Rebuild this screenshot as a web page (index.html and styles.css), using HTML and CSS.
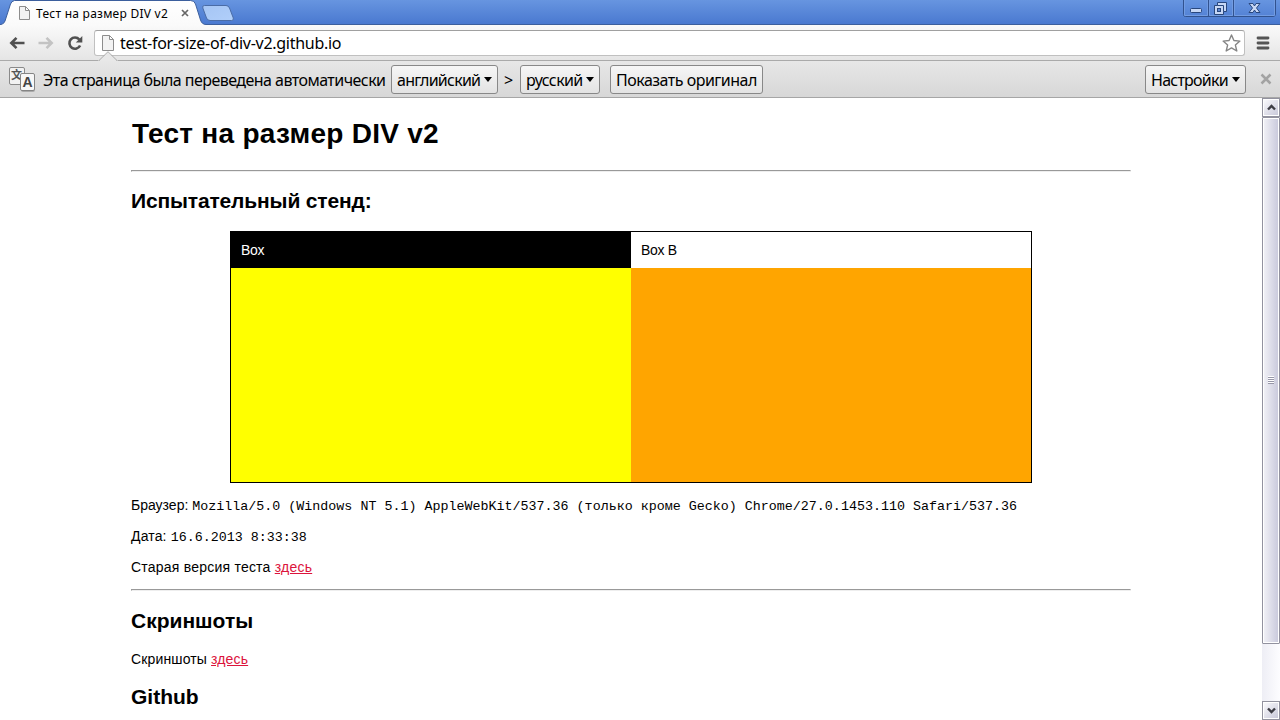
FILE: index.html
```html
<!DOCTYPE html>
<html lang="ru">
<head>
<meta charset="utf-8">
<title>Тест на размер DIV v2</title>
<link rel="stylesheet" href="styles.css">
</head>
<body>
<div class="browser">
  <header class="tabstrip">
    <svg class="tabshape" width="240" height="25" viewBox="0 0 240 25">
      <defs>
        <linearGradient id="tabfill" x1="0" y1="0" x2="0" y2="1"><stop offset="0" stop-color="#fff"/><stop offset="1" stop-color="#fafafa"/></linearGradient>
        <linearGradient id="newfill" x1="0" y1="0" x2="1" y2="1"><stop offset="0" stop-color="#a5c5f4"/><stop offset="1" stop-color="#b1cffa"/></linearGradient>
      </defs>
      <path d="M0 24.5H1Q4 24 5 21L10.500 4Q11.500 1 14.500 .5H190.500Q194.500 .5 195.500 4L200.500 20Q202 24.500 206 24.500V25H0Z" fill="url(#tabfill)"/>
      <path d="M0 24.500H1Q4 24 5 21L10.500 4Q11.500 1 14.500 .5H190.500Q194.500 .5 195.500 4L200.500 20Q202 24.500 206 24.500H240" fill="none" stroke="#3c5f9d"/>
      <path d="M204.500 5.500H226Q228.500 5.500 229.500 8L233.300 18Q234 20.500 231.500 20.500H210Q207.500 20.500 206.500 18L202.800 8Q202 5.500 204.500 5.500Z" fill="url(#newfill)" stroke="#4a6ca6"/>
    </svg>
    <div class="tab">
      <svg width="11" height="14" viewBox="0 0 11 14"><path d="M.5.5H6.500L10.500 4.500V13.500H.5ZM6.500.5V4.500H10.500" fill="#f3f3f3" stroke="#8d8d8d"/></svg>
      <span class="tabtitle">Тест на размер DIV v2</span>
      <svg class="tabclose" width="8" height="8" viewBox="0 0 8 8"><path d="M1 1L7 7M7 1L1 7" stroke="#666" stroke-width="1.700"/></svg>
    </div>
    <svg class="winbuttons" width="94" height="18" viewBox="0 0 94 18">
      <path d="M.5 0V14.500Q.5 16.500 2.500 16.500H90Q92.500 16.500 92.500 14V0M25.500 0V16M50.500 0V16" fill="none" stroke="#31528f"/>
      <path d="M1.500 0V15.500H24.500V0M26.500 0V15.500H49.500V0M51.500 0V15.500H91.500V0" fill="none" stroke="#729ce2"/>
      <rect x="7.500" y="8.500" width="11" height="4" rx="1" fill="#c7d7f5" stroke="#29477d"/>
      <path d="M34.500 2.500H43.500V11.500H40.500V14.500H31.500V5.500H34.500Z" fill="#c7d7f5" stroke="#29477d"/>
      <path d="M34.500 5.500H40.500V11.500" fill="none" stroke="#29477d"/><rect x="34.500" y="8.500" width="3" height="3" fill="#5f89d5" stroke="#29477d"/>
      <path d="M66 3.500H70L71.500 6L73 3.500H77L73.500 8L77 12.500H73L71.500 10L70 12.500H66L69.500 8Z" fill="#c7d7f5" stroke="#29477d"/>
    </svg>
  </header>

  <div class="toolbar">
    <div class="nav">
      <svg width="16" height="14" viewBox="0 0 16 14"><path d="M15.500 7H3M7.500 1.800L2.300 7L7.500 12.200" fill="none" stroke="#505050" stroke-width="2.600"/></svg>
      <svg width="16" height="14" viewBox="0 0 16 14"><path d="M.5 7H13M8.500 1.800L13.700 7L8.500 12.200" fill="none" stroke="#c3c3c3" stroke-width="2.600"/></svg>
      <svg width="16" height="16" viewBox="0 0 16 16"><path d="M12.300 4.500A5.600 5.600 0 1 0 13.100 10.500" fill="none" stroke="#505050" stroke-width="2.600"/><path d="M15.300 1V7.500H8.800Z" fill="#505050"/></svg>
    </div>
    <div class="omnibox">
      <svg width="12" height="16" viewBox="0 0 12 16"><path d="M.5.5H7.500L11.500 4.500V15.500H.5ZM7.500.5V4.500H11.500" fill="#f3f3f3" stroke="#8d8d8d"/></svg>
      <span class="url">test-for-size-of-div-v2.github.io</span>
      <svg class="star" width="19" height="18" viewBox="0 0 19 18"><path d="M9.500 1L11.900 6.500L17.900 7.100L13.400 11.100L14.800 17L9.500 13.900L4.200 17L5.600 11.100L1.100 7.100L7.100 6.500Z" fill="#fff" stroke="#858585" stroke-width="1.400" stroke-linejoin="round"/></svg>
    </div>
    <svg class="menu" width="14" height="14" viewBox="0 0 14 14"><path d="M2 2H12M2 7H12M2 12H12" stroke="#555" stroke-width="2.800" stroke-linecap="round"/></svg>
  </div>

  <div class="infobar">
    <svg class="notch" width="20" height="10" viewBox="0 0 20 10"><path d="M0 9.500H1.500L10 1L18.500 9.500H20V10H0Z" fill="#e8e8e8"/><path d="M1 9.500L10 .7L19 9.500" fill="none" stroke="#aaa"/></svg>
    <svg class="translate" width="28" height="27" viewBox="0 0 28 27">
      <rect x="1.500" y="1.500" width="15" height="17" rx="1.500" fill="#f2f2f2" stroke="#8a8a8a"/>
      <text x="3" y="13" class="glyph-cjk">文</text>
      <rect x="13" y="9" width="14" height="17" rx="2" fill="#aaa"/>
      <rect x="12.500" y="7.500" width="14" height="17" rx="1.500" fill="#f7f7f7" stroke="#858585"/>
      <text x="14.500" y="21" class="glyph-a">A</text>
    </svg>
    <span class="message">Эта страница была переведена автоматически</span>
    <button class="btn from"><span>английский</span><i class="caret"></i></button>
    <span class="gt">&gt;</span>
    <button class="btn to"><span>русский</span><i class="caret"></i></button>
    <button class="btn original"><span>Показать оригинал</span></button>
    <button class="btn settings"><span>Настройки</span><i class="caret"></i></button>
    <svg class="infoclose" width="12" height="12" viewBox="0 0 12 12"><path d="M1.500 1.500L10.500 10.500M10.500 1.500L1.500 10.500" stroke="#a3a3a3" stroke-width="2.500"/></svg>
  </div>

  <div class="viewport">
    <main class="page">
      <h1>Тест на размер DIV v2</h1>
      <hr>
      <h2 class="bench">Испытательный стенд:</h2>
      <div class="boxes">
        <section class="box box-a"><div class="boxhead">Box</div></section>
        <section class="box box-b"><div class="boxhead">Box B</div></section>
      </div>
      <p>Браузер: <code>Mozilla/5.0 (Windows NT 5.1) AppleWebKit/537.36 (только кроме Gecko) Chrome/27.0.1453.110 Safari/537.36</code></p>
      <p class="date">Дата: <code>16.6.2013 8:33:38</code></p>
      <p class="old">Старая версия теста <a href="#">здесь</a></p>
      <hr class="second">
      <h2>Скриншоты</h2>
      <p class="shots">Скриншоты <a href="#">здесь</a></p>
      <h2>Github</h2>
    </main>
    <aside class="scrollbar">
      <div class="arrow"><svg width="9" height="7" viewBox="0 0 9 7"><path d="M1 5.500L4.500 2L8 5.500" fill="none" stroke="#3c3c44" stroke-width="2.400"/></svg></div>
      <div class="thumb"><i class="grip"></i></div>
      <div class="arrow down"><svg width="9" height="7" viewBox="0 0 9 7"><path d="M1 1.500L4.500 5L8 1.500" fill="none" stroke="#3c3c44" stroke-width="2.400"/></svg></div>
    </aside>
  </div>
</div>
</body>
</html>
```

FILE: styles.css
```css
* { box-sizing: border-box; }
body { margin: 0; overflow: hidden; background: #fff; }
svg { display: block; flex: none; }
.browser { width: 1280px; height: 720px; display: flex; flex-direction: column; overflow: hidden; font-family: "Noto Sans", sans-serif; color: #000; }

.tabstrip { position: relative; height: 25px; flex: none; display: flex; justify-content: space-between; background: linear-gradient(#6795e0, #4a79d0); border-bottom: 1px solid #3c5f9d; }
.tabshape { position: absolute; left: 0; top: 0; }
.tab { position: relative; display: flex; align-items: center; height: 26px; padding-left: 19px; }
.tabtitle { margin-left: 6px; width: 132px; font-size: 12px; letter-spacing: 0.25px; white-space: nowrap; }
.tabclose { margin-left: 13px; }
.winbuttons { margin-right: 3px; }

.toolbar { height: 35px; flex: none; display: flex; align-items: center; background: linear-gradient(#fafafa, #e5e5e5); }
.nav { display: flex; align-items: center; gap: 13px; width: 94px; padding-left: 9px; }
.omnibox { width: 1151px; height: 26px; display: flex; align-items: center; padding: 0 3px 0 7px; background: #fff; border: 1px solid #c0c0c0; border-top-color: #a0a0a0; border-radius: 3px; }
.url { margin-left: 6px; font-size: 16px; letter-spacing: -0.28px; line-height: 22px; white-space: nowrap; }
.star { margin-left: auto; }
.menu { margin-left: 11px; }

.infobar { position: relative; height: 38px; flex: none; display: flex; align-items: center; padding-left: 8px; background: linear-gradient(#e7e7e7, #d7d7d7); border-top: 1px solid #aaa; border-bottom: 1px solid #a6a6a6; font-size: 16px; white-space: nowrap; }
.notch { position: absolute; left: 98px; top: -10px; }
.glyph-cjk { font: bold 11px "Noto Sans CJK SC", sans-serif; fill: #555; }
.glyph-a { font: bold 14px "Liberation Sans", sans-serif; fill: #444; }
.message { width: 349px; padding: 2px 0 0 7px; letter-spacing: -0.54px; }
.btn { height: 29px; flex: none; display: flex; align-items: center; justify-content: space-between; padding: 1px 5px 0; font: 16px/22px "Noto Sans", sans-serif; letter-spacing: -0.75px; color: #000; background: linear-gradient(#f6f6f6, #e3e3e3); border: 1px solid #888; border-radius: 3px; white-space: nowrap; }
.caret { flex: none; width: 8px; height: 5px; background: #000; clip-path: polygon(0 0, 100% 0, 50% 100%); }
.from { width: 107px; margin-left: 6px; }
.gt { width: 22px; padding: 2px 0 0 6px; }
.to { width: 80px; letter-spacing: -0.6px; }
.original { width: 153px; margin-left: 10px; letter-spacing: -0.5px; }
.settings { width: 101px; margin-left: auto; }
.infoclose { margin: 0 8px 0 14px; }

.viewport { flex: 1; min-height: 0; display: flex; background: #fff; }
.page { flex: 1; height: 622px; overflow: hidden; padding: 20px 131px 0; font: 14px/16px "Liberation Sans", Arial, sans-serif; }
.page h1 { margin: 0 0 20px; padding-left: 1px; font-size: 28px; line-height: 32px; letter-spacing: 0.27px; }
.page hr { margin: 0; height: 2px; border: 1px solid; border-color: #999 #eee #eee #999; }
.page h2 { margin: 18px 0; font-size: 21px; line-height: 24px; }
.page .bench { margin-top: 17px; letter-spacing: -0.15px; }
.boxes { display: flex; width: 802px; height: 252px; margin: 0 99px 14px; border: 1px solid #000; }
.box { width: 400px; }
.boxhead { height: 36px; padding: 10px; letter-spacing: -0.3px; }
.box-a { background: #ff0; }
.box-a .boxhead { background: #000; color: #fff; }
.box-b { background: #ffa500; }
.box-b .boxhead { background: #fff; }
.page p { margin: 0 0 15px; white-space: nowrap; height: 16px; }
.page code { font: 13.333px/15px "Liberation Mono", "Courier New", monospace; letter-spacing: 0.01px; }
.page .date { letter-spacing: 0.15px; }
.page .old { letter-spacing: 0.22px; }
.page a { color: #dc143c; }
.page .second { margin-top: -1px; }
.page .shots { margin: 0 0 18px; letter-spacing: 0.14px; }

.scrollbar { width: 18px; height: 622px; display: flex; flex-direction: column; background: linear-gradient(90deg, #eeeef5, #fdfdff); }
.arrow { height: 19px; flex: none; display: flex; align-items: center; justify-content: center; border: 1px solid #92929f; box-shadow: inset 0 0 0 1px #fff; background: linear-gradient(135deg, #fcfcfe, #c6c6d8); }
.down { margin-top: auto; }
.thumb { height: 527px; display: flex; align-items: center; justify-content: center; border: 1px solid #92929f; border-radius: 1px; box-shadow: inset 0 0 0 1px #fff; background: linear-gradient(90deg, #f2f2f7, #c8c8db); }
.grip { width: 6px; height: 8px; margin-top: -2px; background: repeating-linear-gradient(#fff 0 1px, #9696a8 1px 2px); }
```
